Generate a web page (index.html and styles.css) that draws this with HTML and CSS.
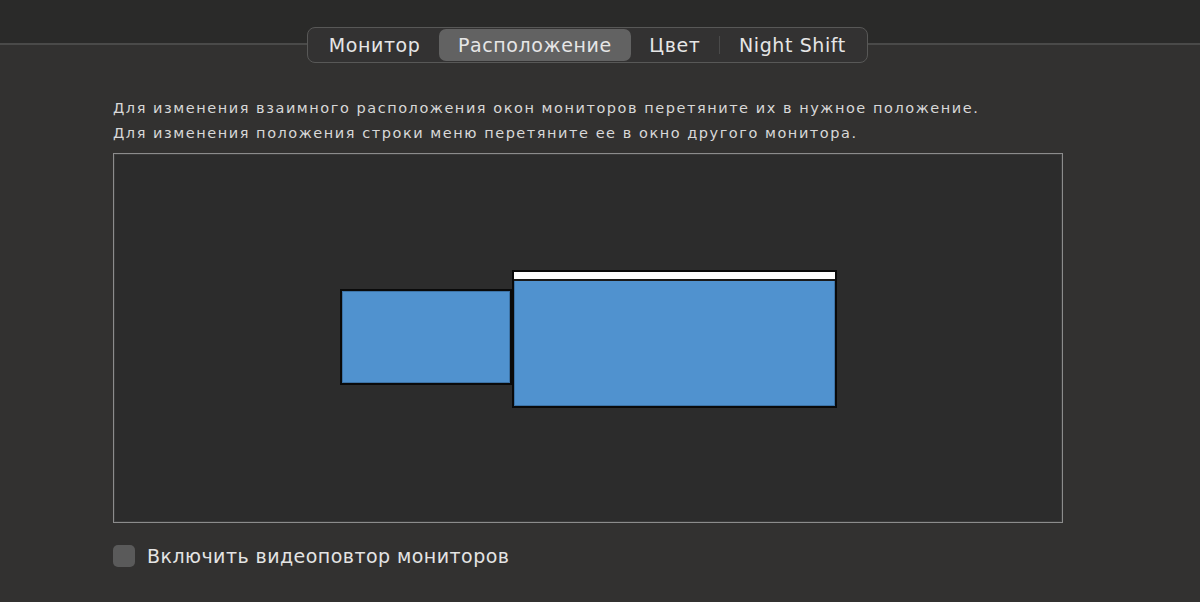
FILE: index.html
```html
<!DOCTYPE html>
<html lang="ru">
<head>
    <meta charset="UTF-8">
    <meta name="viewport" content="width=device-width, initial-scale=1.0">
    <title>Мониторы</title>
    <link rel="stylesheet" href="styles.css">
</head>

<body>
    <!-- Segmented control on the toolbar line -->
    <header class="toolbar">
        <nav class="segments">
            <button class="segment">Монитор</button>
            <button class="segment active">Расположение</button>
            <button class="segment">Цвет</button>
            <span class="divider"></span>
            <button class="segment">Night Shift</button>
        </nav>
    </header>

    <main class="pane">
        <p class="hint">
            Для изменения взаимного расположения окон мониторов перетяните их в нужное положение.<br>
            Для изменения положения строки меню перетяните ее в окно другого монитора.
        </p>

        <!-- Display arrangement canvas; each display is placed by its offset -->
        <div class="arrangement">
            <div class="display" style="left: 226px; top: 135px; width: 172px; height: 96px;"></div>
            <div class="display main" style="left: 398px; top: 116px; width: 325px; height: 138px;">
                <div class="menubar"></div>
            </div>
        </div>

        <label class="mirror">
            <span class="checkbox"></span>
            Включить видеоповтор мониторов
        </label>
    </main>
</body>
</html>
```

FILE: styles.css
```css
:root {
    --bar-bg: #2a2a29;
    --pane-bg: #323130;
    --line: #4a4a49;
    --text: #dcdcdc;
    --display-blue: #5092cf;
}

* {
    margin: 0;
    padding: 0;
    box-sizing: border-box;
}

body {
    font-family: "DejaVu Sans", Verdana, sans-serif;
    background: var(--pane-bg);
    color: var(--text);
    width: 1200px;
    height: 602px;
    overflow: hidden;
}

.toolbar {
    height: 96px;
    padding: 27px 0 0 307px;
    background: linear-gradient(to bottom,
        var(--bar-bg) 0, var(--bar-bg) 43px,
        var(--line) 43px, var(--line) 45px,
        var(--pane-bg) 45px);
}

.segments {
    display: inline-flex;
    align-items: center;
    height: 36px;
    padding: 1px 2px;
    border: 1px solid #585857;
    border-radius: 8px;
    background: #333232;
}

.segment {
    font: inherit;
    font-size: 19px;
    letter-spacing: 0.6px;
    color: #e6e6e6;
    background: none;
    border: none;
    height: 32px;
    padding: 0 18.75px;
    border-radius: 7px;
}

.segment.active {
    background: #626262;
}

.divider {
    width: 1px;
    height: 18px;
    background: #4a4a4a;
}

.pane {
    padding-left: 113px;
}

.hint {
    font-size: 14.5px;
    letter-spacing: 1.54px;
    line-height: 25px;
    color: #d8d8d8;
    margin-bottom: 7px;
    white-space: nowrap;
}

.arrangement {
    position: relative;
    width: 950px;
    height: 370px;
    background: #2c2c2c;
    border: 1px solid #8c8c8c;
    box-shadow: inset 0 0 0 1px #3a3a3a;
}

.display {
    position: absolute;
    background: var(--display-blue);
    border: 2px solid #0a0a0a;
    box-shadow: inset 0 0 0 1px #3d73a6;
}

.menubar {
    height: 9px;
    background: #fff;
    border-bottom: 2px solid #1a1a1a;
}

.mirror {
    display: flex;
    align-items: center;
    gap: 12px;
    margin-top: 22px;
    font-size: 19px;
    letter-spacing: 0.45px;
    color: #e4e4e4;
}

.checkbox {
    width: 22px;
    height: 22px;
    border-radius: 5px;
    background: #5a5a5a;
}
```
